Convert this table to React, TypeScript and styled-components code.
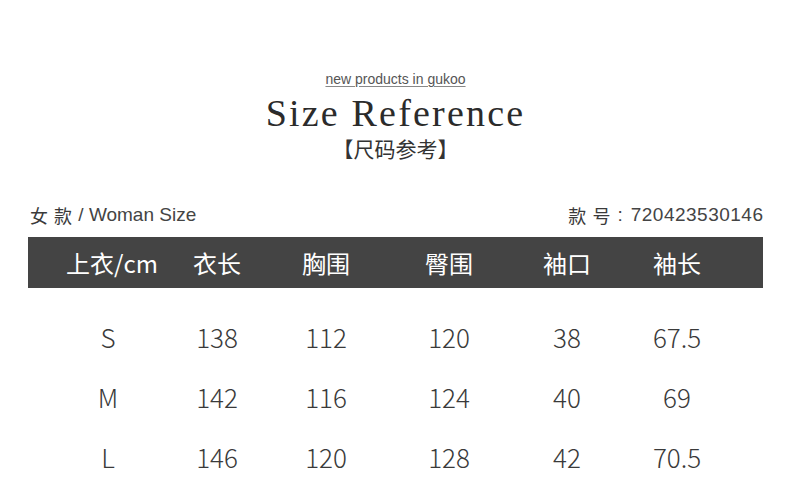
import React from "react";
import styled, { createGlobalStyle } from "styled-components";

const Global = createGlobalStyle`
  html, body { margin: 0; padding: 0; background: #fff; }
  body { width: 790px; height: 495px; overflow: hidden; }
`;

const Page = styled.div`
  width: 790px;
  height: 495px;
  box-sizing: border-box;
  padding: 70px 27px 0 28px;
  display: flex;
  flex-direction: column;
`;

const Heading = styled.header`
  display: flex;
  flex-direction: column;
  align-items: center;
`;

const Tagline = styled.span`
  font-family: "Liberation Sans", Arial, sans-serif;
  font-size: 14px;
  line-height: 18px;
  color: #555;
  text-decoration: underline;
  text-underline-offset: 2px;
  text-decoration-color: #888;
`;

const Title = styled.h1`
  margin: 3px 0 0;
  font-family: "Liberation Serif", "Times New Roman", serif;
  font-weight: 400;
  font-size: 38px;
  letter-spacing: 2.2px;
  line-height: 44px;
  color: #2b2b2b;
`;

const SubTitle = styled.div`
  font-family: "Noto Sans CJK SC", sans-serif;
  font-size: 21px;
  line-height: 28px;
  color: #333;
  margin-top: -1px;
`;

const MetaRow = styled.div`
  margin-top: 41px;
  display: flex;
  justify-content: space-between;
  align-items: center;
  padding: 0 0 0 2px;
  font-family: "Liberation Sans", "Noto Sans CJK SC", sans-serif;
  font-size: 19px;
  line-height: 24px;
  color: #444;
`;

const MetaItem = styled.span`
  display: inline-flex;
  align-items: center;
  white-space: pre;
`;

const Han = styled.span`
  font-family: "Noto Sans CJK SC", sans-serif;
  font-size: 18px;
  line-height: 24px;
  letter-spacing: 1px;
  color: #3a3a3a;
`;

const Colon = styled.span`
  margin: 0 8px 0 6px;
`;

const Digits = styled.span`
  letter-spacing: 0.5px;
  margin-right: -0.5px;
`;

const Table = styled.div`
  margin-top: 10px;
  display: flex;
  flex-direction: column;
`;

const cols = "104px 106px 112px 134px 102px 118px";

const HeadRow = styled.div`
  display: grid;
  grid-template-columns: ${cols};
  padding-left: 32px;
  height: 51px;
  align-items: center;
  background: #444;
  color: #fff;
  font-family: "Noto Sans CJK SC", sans-serif;
  font-size: 24px;
`;

const Body = styled.div`
  margin-top: 18px;
  display: flex;
  flex-direction: column;
`;

const DataRow = styled.div`
  display: grid;
  grid-template-columns: ${cols};
  padding-left: 32px;
  height: 60px;
  align-items: center;
  color: #3a3a3a;
  font-family: "Noto Sans CJK SC", sans-serif;
  font-size: 26px;
  font-weight: 300;
`;

const Cell = styled.div<{ $shift?: number }>`
  text-align: center;
  white-space: nowrap;
  transform: translateX(${(p) => p.$shift ?? 0}px);
`;

const headers = ["上衣/cm", "衣长", "胸围", "臀围", "袖口", "袖长"];
const rows = [
  ["S", "138", "112", "120", "38", "67.5"],
  ["M", "142", "116", "124", "40", "69"],
  ["L", "146", "120", "128", "42", "70.5"],
];

export default function App() {
  return (
    <>
      <Global />
      <Page>
        <Heading>
          <Tagline>new products in gukoo</Tagline>
          <Title>Size Reference</Title>
          <SubTitle>【尺码参考】</SubTitle>
        </Heading>
        <MetaRow>
          <MetaItem>
            <Han>女 款</Han> / Woman Size
          </MetaItem>
          <MetaItem>
            <Han>款 号</Han>
            <Colon>:</Colon>
            <Digits>720423530146</Digits>
          </MetaItem>
        </MetaRow>
        <Table>
          <HeadRow>
            {headers.map((h) => (
              <Cell key={h}>{h}</Cell>
            ))}
          </HeadRow>
          <Body>
            {rows.map((r) => (
              <DataRow key={r[0]}>
                {r.map((v, i) => (
                  <Cell key={i} $shift={i === 0 ? -4 : 0}>
                    {v}
                  </Cell>
                ))}
              </DataRow>
            ))}
          </Body>
        </Table>
      </Page>
    </>
  );
}
